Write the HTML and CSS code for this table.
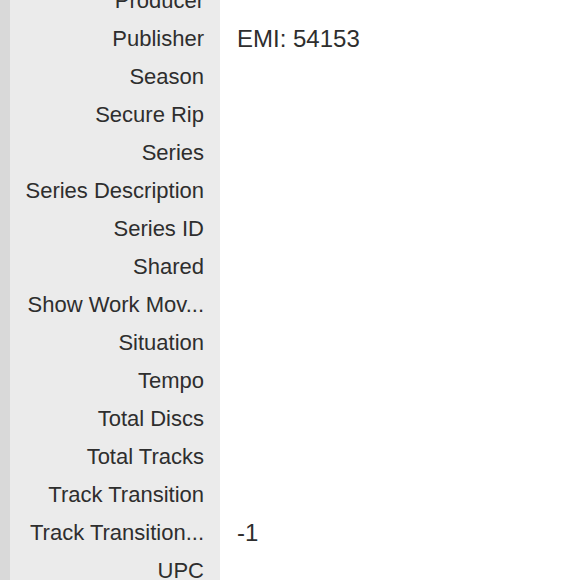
FILE: index.html
```html
<!DOCTYPE html>
<html>
<head>
<meta charset="utf-8">
<link rel="stylesheet" href="styles.css">
</head>
<body>
<div class="pane">
  <div class="strip"></div>
  <div class="props">
    <div class="row"><div class="label">Producer</div><div class="value"></div></div>
    <div class="row"><div class="label">Publisher</div><div class="value">EMI: 54153</div></div>
    <div class="row"><div class="label">Season</div><div class="value"></div></div>
    <div class="row"><div class="label">Secure Rip</div><div class="value"></div></div>
    <div class="row"><div class="label">Series</div><div class="value"></div></div>
    <div class="row"><div class="label">Series Description</div><div class="value"></div></div>
    <div class="row"><div class="label">Series ID</div><div class="value"></div></div>
    <div class="row"><div class="label">Shared</div><div class="value"></div></div>
    <div class="row"><div class="label">Show Work Mov...</div><div class="value"></div></div>
    <div class="row"><div class="label">Situation</div><div class="value"></div></div>
    <div class="row"><div class="label">Tempo</div><div class="value"></div></div>
    <div class="row"><div class="label">Total Discs</div><div class="value"></div></div>
    <div class="row"><div class="label">Total Tracks</div><div class="value"></div></div>
    <div class="row"><div class="label">Track Transition</div><div class="value"></div></div>
    <div class="row"><div class="label">Track Transition...</div><div class="value">-1</div></div>
    <div class="row"><div class="label">UPC</div><div class="value"></div></div>
  </div>
</div>
</body>
</html>
```
FILE: styles.css
```css
html, body {
  margin: 0;
  padding: 0;
  height: 100%;
  overflow: hidden;
  background: #ffffff;
}
.pane {
  display: flex;
  height: 580px;
  overflow: hidden;
  font-family: "Liberation Sans", Arial, sans-serif;
  color: #2e2e2e;
}
.strip {
  width: 10px;
  flex: none;
  background: #d9d9d9;
}
.props {
  flex: 1;
  display: grid;
  grid-template-columns: 210px 1fr;
  grid-auto-rows: 38px;
  margin-top: -18px;
  background: linear-gradient(to right, #ebebeb 210px, #ffffff 210px);
}
.row {
  display: contents;
}
.label {
  display: flex;
  align-items: center;
  justify-content: flex-end;
  padding-right: 16px;
  font-size: 22px;
  white-space: nowrap;
}
.value {
  display: flex;
  align-items: center;
  padding-left: 17px;
  font-size: 24px;
  white-space: nowrap;
}
```
